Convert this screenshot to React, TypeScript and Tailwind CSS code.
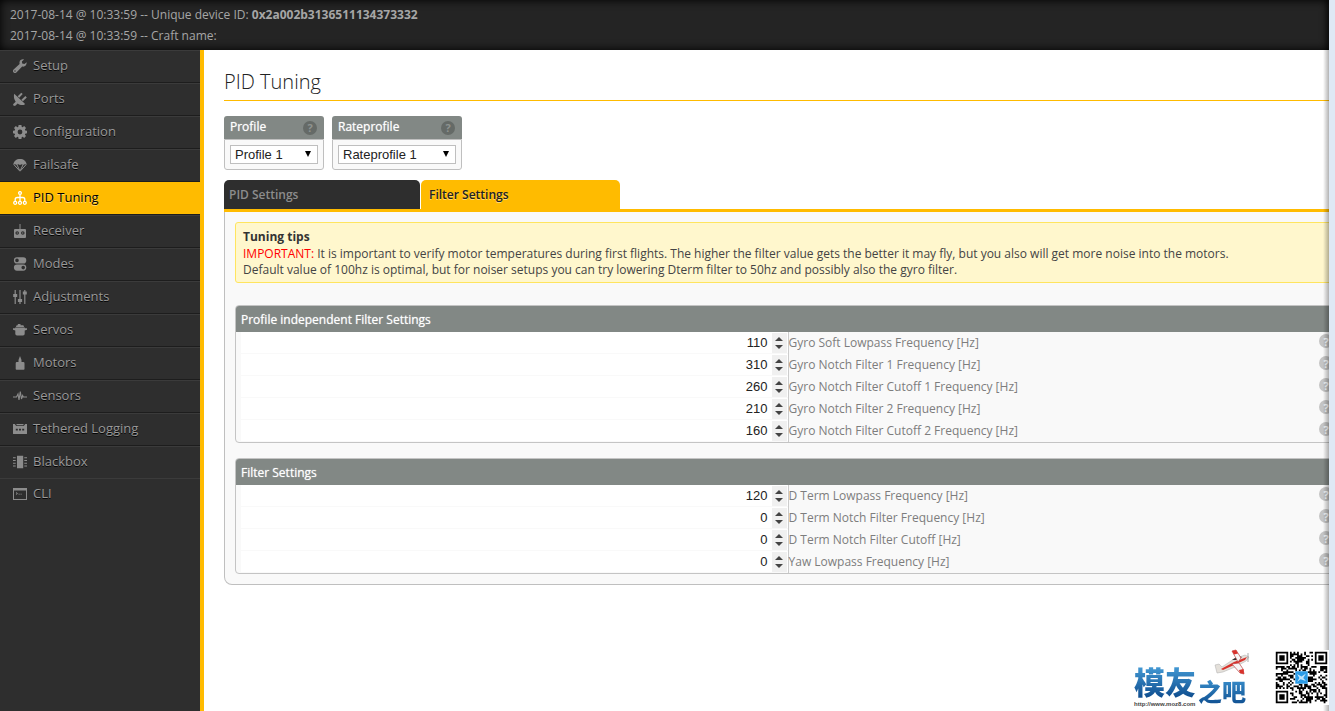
import { useState } from 'react';
import type { ReactNode } from 'react';

const I = ({ children }: { children: ReactNode }) => (
  <svg viewBox="0 0 14 14" className="mb-0.5 h-[14px] w-[14px] shrink-0" fill="currentColor" stroke="none" aria-hidden="true">
    {children}
  </svg>
);

const menu: { name: string; icon: ReactNode }[] = [
  {
    name: 'Setup',
    icon: <path d="M13.7 3.200 11.400 5 9.200 4.600 8.900 2.600 11 .5C9 0 6.800 1 6.500 3.200c-.1.7 0 1.200.1 1.700L.6 10.600a1.900 1.900 0 0 0 2.800 2.800L9.200 7.600c2.800.7 4.700-1.700 4.500-4.400ZM2 11.300a.7.700 0 1 1 0 1.400.7.700 0 0 1 0-1.400Z" fillRule="evenodd" />,
  },
  {
    name: 'Ports',
    icon: <path d="M1.200 1.800 11.900 11.800 11.500 12.700C9.500 13.500 6.500 13 4.700 11.500L2 14 0 13.200.3 12 2.700 9.700C1 7.500.5 4.500 1.200 1.800ZM4.700 4.200 8.300.7 9.700 2 6.200 5.700ZM8.400 7.800 12.400 4 13.800 5.400 9.900 9.300Z" />,
  },
  {
    name: 'Configuration',
    icon: (
      <path
        fillRule="evenodd"
        d="M5.600 0h2.800l.4 1.900.8.3L11.200 1.100l1.800 1.800-1.100 1.600.3.900 1.800.3v2.600l-1.800.4-.3.8 1.100 1.600-1.800 1.800-1.600-1.100-.8.300L8.400 14H5.600l-.4-1.900-.8-.3-1.600 1.100L1 11.100l1.100-1.600-.3-.8L0 8.300V5.700l1.800-.3.3-.9L1 2.900l1.800-1.800 1.600 1.100.8-.3ZM7 4.600a2.400 2.400 0 1 0 0 4.800 2.400 2.400 0 0 0 0-4.800Z"
      />
    ),
  },
  {
    name: 'Failsafe',
    icon: (
      <>
        <path d="M.3 6.500C.8 3 3.400 1 7 1S13.200 3 13.700 6.500L11.800 6.200 10.200 7 8.600 6.200 7 7 5.400 6.200 3.800 7 2.200 6.200Z" />
        <path d="m.8 6.500 5.700 6.300h1L13.200 6.500M4 6.800l2.700 5.700M10 6.800l-2.700 5.700" fill="none" stroke="currentColor" strokeWidth="1" />
      </>
    ),
  },
  {
    name: 'PID Tuning',
    icon: (
      <g fill="none" stroke="currentColor" strokeWidth="1.3">
        <circle cx="7" cy="2" r="1.400" />
        <path d="M7 3.500V10M2.200 10V8.500Q2.200 6.500 4.200 6.500H9.800Q11.800 6.500 11.800 8.500V10" />
        <circle cx="2.200" cy="11.800" r="1.500" />
        <circle cx="7" cy="11.800" r="1.500" />
        <circle cx="11.800" cy="11.800" r="1.500" />
      </g>
    ),
  },
  {
    name: 'Receiver',
    icon: (
      <path
        fillRule="evenodd"
        d="M6.500 0h1v5H12q1 0 1 1v7q0 1-1 1H2q-1 0-1-1V6q0-1 1-1h4.500ZM4.200 7.200a1.800 1.800 0 1 0 0 3.600 1.800 1.800 0 0 0 0-3.600Zm5.600 0a1.800 1.800 0 1 0 0 3.600 1.800 1.800 0 0 0 0-3.600ZM3.800 8.300h.8v1.400h-.8Zm5.600 0h.8v1.400h-.8Z"
      />
    ),
  },
  {
    name: 'Modes',
    icon: (
      <path
        fillRule="evenodd"
        d="M4 .3h6.200a3.100 3.100 0 0 1 0 6.200H4a3.100 3.100 0 0 1 0-6.200Zm0 1.300a1.800 1.800 0 1 0 0 3.600 1.800 1.800 0 0 0 0-3.600ZM4 7.500h6.200a3.100 3.100 0 0 1 0 6.200H4a3.100 3.100 0 0 1 0-6.200Zm6.200 1.300a1.800 1.800 0 1 0 0 3.600 1.800 1.800 0 0 0 0-3.600Z"
      />
    ),
  },
  {
    name: 'Adjustments',
    icon: (
      <path d="M1.600 0h1.200v4h1.400v3H2.800v7H1.600V7H.2V4h1.400ZM6.400 0h1.200v9h1.500v3H7.600v2H6.400v-2H4.900V9h1.500ZM11.200 0h1.200v1.500h1.400v3h-1.400V14h-1.200V4.500H9.800v-3h1.400Z" />
    ),
  },
  {
    name: 'Servos',
    icon: <path d="M4.800 1h2.700v1.300H10q1 .2 1 1.700H3q0-1.500 1-1.700h.8ZM2.200 4.600h9.600V5.200H14v1.500l-2.300.8v3.300q0 1.700-1.700 1.700H4q-1.700 0-1.700-1.700V7.500L0 6.700V5.200h2.200Z" />,
  },
  {
    name: 'Motors',
    icon: <path d="M7 0 8.500 4v2h1.800Q11.500 6 11.500 7.200V13q0 .8-.8.8H3.500q-.8 0-.8-.8V7.200Q2.700 6 3.900 6h1.600V4Z" />,
  },
  {
    name: 'Sensors',
    icon: <path d="M0 8h3.500L5 5l1 6L7.300 2.500 8.500 10 9.600 6.500 10.300 8H14" fill="none" stroke="currentColor" strokeWidth="1.1" />,
  },
  {
    name: 'Tethered Logging',
    icon: (
      <path
        fillRule="evenodd"
        d="M0 2h1.800L3.200 4h7.600L12.200 2H14v9.500q0 .5-.5.500H.5q-.5 0-.5-.5ZM3.500 2h7v1.200h-7ZM2.800 6.800v1.700H4.800V6.800Zm3.200 0v1.700h2V6.800Zm3.200 0v1.700h2V6.800Z"
      />
    ),
  },
  {
    name: 'Blackbox',
    icon: (
      <path d="M4 .8h6.200V13.200H4ZM0 2.300h2.700v1H0Zm0 2.700h2.700v1H0Zm0 2.700h2.700v1H0Zm0 2.800h2.700v1H0ZM11.300 2.300H14v1h-2.700Zm0 2.700H14v1h-2.700Zm0 2.700H14v1h-2.700Zm0 2.800H14v1h-2.700Z" />
    ),
  },
  {
    name: 'CLI',
    icon: (
      <path
        fillRule="evenodd"
        d="M0 1h14v12H0Zm1 2.500V12h12V3.500ZM3 5l2 1.500L3 8V7l.8-.5L3 6Zm2.500 1.700h1.300v.8H5.500Zm2 0h1.300v.8H7.500Z"
      />
    ),
  },
];

const gyroFilters = [
  { id: 'gyroLowpass', label: 'Gyro Soft Lowpass Frequency [Hz]', value: 110 },
  { id: 'gyroNotch1', label: 'Gyro Notch Filter 1 Frequency [Hz]', value: 310 },
  { id: 'gyroCutoff1', label: 'Gyro Notch Filter Cutoff 1 Frequency [Hz]', value: 260 },
  { id: 'gyroNotch2', label: 'Gyro Notch Filter 2 Frequency [Hz]', value: 210 },
  { id: 'gyroCutoff2', label: 'Gyro Notch Filter Cutoff 2 Frequency [Hz]', value: 160 },
];

const profileFilters = [
  { id: 'dtermLowpass', label: 'D Term Lowpass Frequency [Hz]', value: 120 },
  { id: 'dtermNotch', label: 'D Term Notch Filter Frequency [Hz]', value: 0 },
  { id: 'dtermCutoff', label: 'D Term Notch Filter Cutoff [Hz]', value: 0 },
  { id: 'yawLowpass', label: 'Yaw Lowpass Frequency [Hz]', value: 0 },
];

function Help({ className }: { className: string }) {
  return (
    <span className={`flex h-[14px] w-[14px] shrink-0 items-center justify-center rounded-full text-[11px] leading-none font-bold ${className}`}>
      ?
    </span>
  );
}

function ProfileBox({ id, title, option, className }: { id: string; title: string; option: string; className: string }) {
  return (
    <div className={className}>
      <div className="flex h-[23px] items-center justify-between rounded-t-[3px] bg-[#828885] pr-[7px] pl-1.5">
        <label htmlFor={id} className="pb-0.5 text-xs font-medium text-white [text-shadow:0_0_1px_rgba(255,255,255,0.7)]">{title}</label>
        <Help className="bg-[#656a67] text-[#8e9390]" />
      </div>
      <div className="rounded-b-[3px] border border-[#bfbfbf] bg-[#f9f9f9] p-[5px]">
        <div className="relative">
          <select
            id={id}
            className="block h-[19px] w-full appearance-none border border-[#bfbfbf] bg-white pl-1 font-['Liberation_Sans',Arial,sans-serif] text-[13px] leading-4 text-[#222]">
            <option>{option}</option>
          </select>
          <svg viewBox="0 0 6 6" className="pointer-events-none absolute top-1.5 right-[7px] h-1.5 w-1.5" aria-hidden="true">
            <path d="M0 0h6L3 6Z" />
          </svg>
        </div>
      </div>
    </div>
  );
}

function FilterRow({ id, label, value }: { id: string; label: string; value: number }) {
  const [current, setCurrent] = useState(value);

  return (
    <tr className="h-[22px]">
      <td className="w-1/2 border-r border-[#ccc] p-0 pl-[5px]">
        <div className="mb-px flex h-[21px] bg-white">
          <input
            id={id}
            type="number"
            value={current}
            onChange={e => setCurrent(Number(e.target.value))}
            className="min-w-0 flex-1 [appearance:textfield] bg-white pr-1 text-right font-['Liberation_Sans',Arial,sans-serif] text-[13px] text-[#222] [&::-webkit-inner-spin-button]:appearance-none"
          />
          <div className="mt-px mr-px flex w-[15px] flex-col items-center justify-center gap-1 bg-[#f0f0f0]">
            <button type="button" aria-label={`Increase ${label}`} onClick={() => setCurrent(current + 1)}>
              <svg viewBox="0 0 8 4" className="block h-1 w-2"><path d="M4 0 8 4H0Z" fill="#444" /></svg>
            </button>
            <button type="button" aria-label={`Decrease ${label}`} onClick={() => setCurrent(Math.max(0, current - 1))}>
              <svg viewBox="0 0 8 4" className="block h-1 w-2"><path d="M0 0h8L4 4Z" fill="#444" /></svg>
            </button>
          </div>
        </div>
      </td>
      <td className="p-0">
        <div className="flex items-start justify-between pr-[7px]">
          <label htmlFor={id} className="text-xs leading-5 text-[#7d7d7d]">{label}</label>
          <Help className="mt-px bg-[#c4c4c4] text-white" />
        </div>
      </td>
    </tr>
  );
}

function FilterPanel({ title, rows }: { title: string; rows: typeof gyroFilters }) {
  return (
    <section className="overflow-hidden rounded-[4px] border border-[#c4c4c4] bg-[#f9f9f9]">
      <table className="w-full table-fixed border-collapse">
        <thead>
          <tr className="h-[26px] bg-[#828885]">
            <th colSpan={2} className="p-0 pt-0.5 pl-[5px] text-left text-xs font-medium text-white [text-shadow:0_0_1px_rgba(255,255,255,0.7)]">{title}</th>
          </tr>
        </thead>
        <tbody>
          {rows.map(row => <FilterRow key={row.id} {...row} />)}
        </tbody>
      </table>
    </section>
  );
}

// finder squares are drawn separately, the rest is a fixed bit pattern
function QrCode() {
  const size = 29;
  const cells: string[] = [];
  let seed = 77;
  for (let y = 0; y < size; y++) {
    for (let x = 0; x < size; x++) {
      seed = (seed * 1103515245 + 12345) % 2147483648;
      const finder = (x < 8 && y < 8) || (x > 20 && y < 8) || (x < 8 && y > 20);
      const center = x > 10 && x < 18 && y > 10 && y < 18;
      if (!finder && !center && (seed >> 16) % 20 < 11) cells.push(`M${x} ${y}h1v1h-1Z`);
    }
  }
  return (
    <svg viewBox="-1 -1 31 31" className="h-[55px] w-[55px] bg-white" role="img" aria-label="QR code">
      <path d={cells.join('')} />
      {[[0, 0], [22, 0], [0, 22]].map(([x, y]) => (
        <path key={`${x}-${y}`} fillRule="evenodd" d={`M${x} ${y}h7v7h-7ZM${x + 1} ${y + 1}v5h5v-5ZM${x + 2} ${y + 2}h3v3h-3Z`} />
      ))}
      <rect x="11" y="11" width="7" height="7" fill="#2b9be6" />
      <path d="M12 12.500 14.500 14 17 12.200 15.500 14.800 17 16.500 14 15.500 12 17 13.300 14.800Z" fill="#bfe3fb" />
    </svg>
  );
}

function Plane() {
  return (
    <svg viewBox="0 0 36 28" className="absolute -top-[18px] left-[80px] h-7 w-9" aria-hidden="true">
      <path d="M1 16 5 15 8 18 20 10 31 6 35 8 32 12 21 18 9 23 3 24Z" fill="#e4e0da" stroke="#aaa" strokeWidth=".5" />
      <path d="M7 20 20 13 33 8 31 11 20 16 9 21Z" fill="#d8322c" />
      <path d="M18 11 24 7 28 8 24 11Z" fill="#333" />
      <path d="M18 2 22 1 27 9 24 13Z" fill="#f6f6f6" stroke="#b44" strokeWidth=".7" />
      <path d="M18 15 25 14 29 20 30 25 26 24Z" fill="#f6f6f6" stroke="#b44" strokeWidth=".7" />
      <path d="m18 2 4-1 2 3.500-4 1ZM25 21l4.500-1 .5 5-4-1Z" fill="#d8322c" />
      <path d="m34 4 0 9" stroke="#777" strokeWidth=".6" />
    </svg>
  );
}

export default function App() {
  const [active, setActive] = useState('PID Tuning');

  return (
    <div className="relative flex h-screen overflow-hidden bg-[#dfe9f5] font-['Open_Sans','Noto_Sans',sans-serif]">
      <div className="relative flex min-w-0 flex-1 flex-col overflow-hidden bg-white">
        <header className="h-[50px] shrink-0 bg-[#242424] px-2.5 pt-1 text-xs leading-[21px] text-[#a6a6a6] shadow-[inset_0_0_10px_#000]">
          <p>2017-08-14 @ 10:33:59 -- Unique device ID: <b>0x2a002b3136511134373332</b></p>
          <p>2017-08-14 @ 10:33:59 -- Craft name:</p>
        </header>

        <div className="flex min-h-0 flex-1">
          <nav className="w-[204px] shrink-0 border-r-4 border-[#ffbb00] bg-[#2e2e2e]">
            <ul>
              {menu.map(({ name, icon }) => (
                <li
                  key={name}
                  className={name === 'Blackbox' || name === 'CLI' ? 'border-t border-[#3b3b3b]' : name === active ? 'border-y border-t-[#ffbb00] border-b-[#1d1d1d]' : 'border-y border-t-[#3b3b3b] border-b-[#1d1d1d]'}>
                  <a
                    href="#"
                    onClick={() => setActive(name)}
                    className={`flex h-[31px] items-center gap-1.5 pl-[13px] text-[13px] ${name === active ? 'bg-[#ffbb00] text-white' : 'text-[#8c8c8c]'}`}>
                    <I>{icon}</I>
                    <span className={`pb-0.5 ${name === active ? 'text-black [text-shadow:0_1px_rgba(255,255,255,0.45)]' : 'text-[#999] [text-shadow:0_1px_rgba(0,0,0,0.9)]'}`}>{name}</span>
                  </a>
                </li>
              ))}
            </ul>
          </nav>

          <main className="min-w-0 flex-1 overflow-hidden pl-5">
            {/* content runs past the window edge */}
            <div className="-mr-[23px]">
              <h1 className="border-b border-[#ffbb00] pt-[18px] pb-1 text-xl leading-7 font-light text-[#222]">PID Tuning</h1>

              <div className="mt-[15px] flex gap-2">
                <ProfileBox id="profile" title="Profile" option="Profile 1" className="w-[100px]" />
                <ProfileBox id="rateprofile" title="Rateprofile" option="Rateprofile 1" className="w-[130px]" />
              </div>

              <div className="mt-2.5 flex gap-px border-b-[3px] border-[#ffbb00] text-xs" role="tablist">
                <button type="button" role="tab" aria-selected="false" className="h-[29px] w-[196px] rounded-t-[5px] bg-[#2e2e2e] pl-[5px] text-left font-semibold text-[#8c8c8c]">
                  PID Settings
                </button>
                <button type="button" role="tab" aria-selected="true" className="h-[29px] w-[199px] rounded-t-[5px] bg-[#ffbb00] pl-2 text-left font-semibold text-[#222] [text-shadow:0_1px_rgba(255,255,255,0.45)]">
                  Filter Settings
                </button>
              </div>

              <div className="rounded-b-lg border border-t-0 border-[#bfbfbf] bg-[#f9f9f9] p-2.5">
                <div className="rounded-[3px] border border-[#ffe55f] bg-[#fff7cd] px-[7px] pt-1.5 pb-1 text-xs leading-4 text-[#444]">
                  <p className="pb-px font-bold text-[#333]">Tuning tips</p>
                  <p><span className="text-[#ff0000]">IMPORTANT:</span> It is important to verify motor temperatures during first flights. The higher the filter value gets the better it may fly, but you also will get more noise into the motors.</p>
                  <p>Default value of 100hz is optimal, but for noiser setups you can try lowering Dterm filter to 50hz and possibly also the gyro filter.</p>
                </div>
                <div className="mt-[22px] flex flex-col gap-[15px]">
                  <FilterPanel title="Profile independent Filter Settings" rows={gyroFilters} />
                  <FilterPanel title="Filter Settings" rows={profileFilters} />
                </div>
              </div>
            </div>
          </main>
        </div>

        <div className="pointer-events-none absolute inset-y-0 right-0 w-1.5 bg-linear-to-r from-transparent to-black/30" />
      </div>
      <div className="w-1.5 shrink-0" />

      {/* watermark */}
      <div className="pointer-events-none absolute right-[6px] bottom-1.5 flex items-end gap-[26px]">
        <div className="relative h-[38px] w-[114px] font-['Noto_Sans_CJK_SC',sans-serif] font-black">
          <span className="absolute -top-1 left-0 bg-linear-to-b from-[#4aa3dd] to-[#0c4a8c] bg-clip-text text-[31px] leading-9 text-transparent">模友</span>
          <span className="absolute top-2 left-16 bg-linear-to-b from-[#3f98d4] to-[#0c4a8c] bg-clip-text text-2xl leading-8 text-transparent">之吧</span>
          <span className="absolute top-[33px] left-0 font-['Liberation_Sans',Arial,sans-serif] text-[6px] leading-2 font-bold text-[#444]">http://www.moz8.com</span>
          <Plane />
        </div>
        <QrCode />
      </div>
    </div>
  );
}
